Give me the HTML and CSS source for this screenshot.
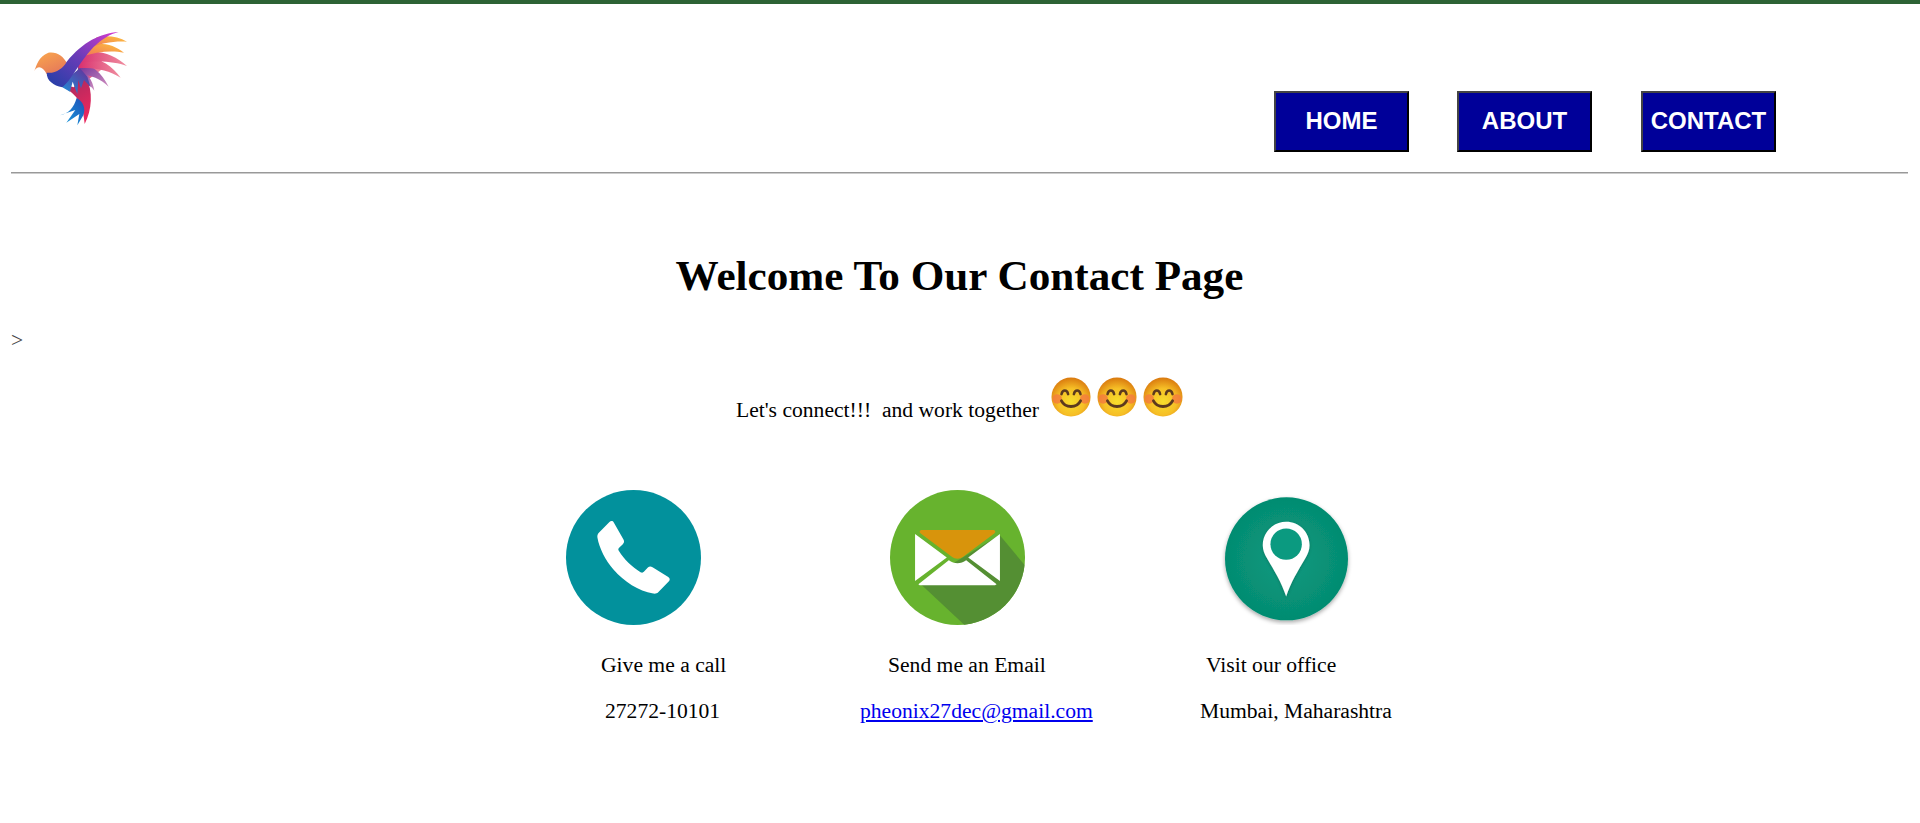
FILE: index.html

```html
<!DOCTYPE html>
<html>

<head>
    <meta charset="utf-8">
    <title>Contact</title>
    <link rel="stylesheet" href="styles.css">
</head>

<body>
<div class="header">
    <svg class="logo" viewBox="90 84 300 300">
        <defs>
            <linearGradient id="wing" x1="1" y1="0" x2="0" y2="1">
                <stop offset="0" stop-color="#d63bd0"/>
                <stop offset="0.5" stop-color="#6a3cb8"/>
                <stop offset="1" stop-color="#1f3fa6"/>
            </linearGradient>
            <linearGradient id="head" x1="0" y1="0" x2="0.6" y2="1">
                <stop offset="0" stop-color="#fba94c"/>
                <stop offset="1" stop-color="#e5785a"/>
            </linearGradient>
            <linearGradient id="feather1" x1="1" y1="0" x2="0" y2="1">
                <stop offset="0" stop-color="#fdc23c"/>
                <stop offset="1" stop-color="#f0705a"/>
            </linearGradient>
            <linearGradient id="feather2" x1="1" y1="0.5" x2="0" y2="0.5">
                <stop offset="0" stop-color="#f08fa0"/>
                <stop offset="1" stop-color="#d92f6e"/>
            </linearGradient>
            <linearGradient id="feather3" x1="1" y1="1" x2="0" y2="0">
                <stop offset="0" stop-color="#d08fc0"/>
                <stop offset="1" stop-color="#6a2a96"/>
            </linearGradient>
            <linearGradient id="tail" x1="0" y1="0" x2="0.5" y2="1">
                <stop offset="0" stop-color="#9c2a5e"/>
                <stop offset="1" stop-color="#e8285e"/>
            </linearGradient>
            <linearGradient id="blue" x1="1" y1="0" x2="0" y2="1">
                <stop offset="0" stop-color="#1f4fb8"/>
                <stop offset="1" stop-color="#18a4e0"/>
            </linearGradient>
            <linearGradient id="mid" x1="1" y1="0" x2="0" y2="1">
                <stop offset="0" stop-color="#6a2a96"/>
                <stop offset="1" stop-color="#1c8fd8"/>
            </linearGradient>
        </defs>
        <path fill="url(#feather2)" d="M240 170L300 160L310 205L270 235L235 230Z"/>
        <path fill="url(#feather3)" d="M235 205C260 215 278 240 283 272C268 252 250 240 225 245Z"/>
        <path fill="url(#feather3)" d="M235 190C275 190 305 220 326 260C300 235 265 222 232 225Z"/>
        <path fill="url(#feather2)" d="M238 175C290 165 335 195 362 233C325 210 280 200 235 205Z"/>
        <path fill="url(#feather2)" d="M245 160C295 145 345 165 381 198C345 185 290 180 235 190Z"/>
        <path fill="url(#feather1)" d="M265 135C305 125 345 135 372 158C335 150 290 155 245 170Z"/>
        <path fill="url(#feather1)" d="M290 112C320 105 355 110 381 125C345 122 300 130 265 145Z"/>
        <path fill="url(#tail)" d="M168 248C205 272 248 280 254 372C276 330 280 275 258 232L235 232L222 262Z"/>
        <path fill="url(#blue)" d="M180 346C205 342 222 322 230 294C250 305 258 325 250 346L232 376L238 342L199 368L226 330Z"/>
        <path fill="url(#head)" d="M103 213C110 195 115 170 145 158C170 154 190 168 201 190L178 224C160 230 145 222 140 222C128 198 112 196 103 213Z"/>
        <path fill="url(#mid)" d="M187 262L205 232L240 205L262 230L272 262L252 240L243 265L235 240L232 282L218 245L210 275Z"/>
        <path fill="url(#wing)" d="M356 96C300 100 250 125 200 185C190 205 165 222 140 218C140 242 160 256 187 262C215 240 235 190 280 142C305 118 330 102 356 96Z"/>
    </svg>
    <div class="nav">
        <button class="nav-btn">HOME</button>
        <button class="nav-btn">ABOUT</button>
        <button class="nav-btn">CONTACT</button>
    </div>
</div>
<hr class="rule">
<h1 class="title">Welcome To Our Contact Page</h1>
<div class="stray">&gt;</div>
<p class="connect">
    <span>Let's connect!!!&nbsp; and work together</span>
    <span class="smileys">
        <svg class="smiley" viewBox="0 0 42 42"><use href="#smile"/></svg>
        <svg class="smiley" viewBox="0 0 42 42"><use href="#smile"/></svg>
        <svg class="smiley" viewBox="0 0 42 42"><use href="#smile"/></svg>
    </span>
</p>
<svg class="defs-only">
    <defs>
        <radialGradient id="face" cx="0.5" cy="0.62" r="0.62">
            <stop offset="0" stop-color="#f8de2c"/>
            <stop offset="0.55" stop-color="#f6bf26"/>
            <stop offset="1" stop-color="#d9780e"/>
        </radialGradient>
        <g id="smile">
            <circle cx="21" cy="21" r="20.5" fill="url(#face)"/>
            <circle cx="6.5" cy="23" r="5" fill="#f47a3e" opacity="0.8"/>
            <circle cx="35.5" cy="23" r="5" fill="#f47a3e" opacity="0.8"/>
            <path d="M11 18C12 13 17 13 18 18M24 18C25 13 30 13 31 18" fill="none" stroke="#5c3a1e" stroke-width="2.6" stroke-linecap="round"/>
            <path d="M11 25C15 33 27 33 31 25" fill="none" stroke="#5c3a1e" stroke-width="3" stroke-linecap="round"/>
        </g>
    </defs>
</svg>
<div class="contacts">
    <div class="contact">
        <svg class="icon" viewBox="48 30 404 404">
            <circle cx="250" cy="232" r="202" fill="#02919c"/>
            <path fill="#fff" d="M178 126C182 122 188 122 191 127L220 178C223 183 222 188 218 192L207 203C204 206 204 209 206 212C222 238 245 260 271 276C275 278 278 278 281 275L293 262C297 258 302 258 307 261L354 290C359 293 360 299 356 303L324 336C320 340 315 341 309 340C265 332 222 305 190 268C165 238 148 205 142 172C141 166 143 161 147 157Z"/>
        </svg>
        <div class="line call-a">Give me a call</div>
        <div class="line call-b">27272-10101</div>
    </div>
    <div class="contact">
        <svg class="icon" viewBox="30 30 404 404">
            <defs><clipPath id="mail-clip"><circle cx="232" cy="232" r="202"/></clipPath></defs>
            <circle cx="232" cy="232" r="202" fill="#67b32e"/>
            <path clip-path="url(#mail-clip)" fill="#548f33" d="M358 165L450 275V450H270L120 310Z"/>
            <path fill="#fff" d="M105 162L200 232L105 302ZM359 162V302L264 232ZM115 312L206 240C222 252 242 252 258 240L349 312C346 315 343 315 340 315H124C120 315 117 315 115 312Z"/>
            <path fill="#d8940c" d="M126 150H338C345 150 348 156 342 160L250 229C238 238 226 238 214 229L122 160C116 156 119 150 126 150Z"/>
        </svg>
        <div class="line mail-a">Send me an Email</div>
        <div class="line mail-b"><a href="#">pheonix27dec@gmail.com</a></div>
    </div>
    <div class="contact">
        <svg class="icon" viewBox="30 23 404 404">
            <defs>
                <radialGradient id="pin-bg" cx="0.5" cy="0.5" r="0.5">
                    <stop offset="0" stop-color="#0b9a80"/>
                    <stop offset="1" stop-color="#058c71"/>
                </radialGradient>
                <filter id="soft" x="-20%" y="-20%" width="140%" height="140%">
                    <feDropShadow dx="0" dy="6" stdDeviation="6" flood-color="#000" flood-opacity="0.35"/>
                </filter>
                <filter id="soft-pin" x="-30%" y="-30%" width="160%" height="160%">
                    <feDropShadow dx="0" dy="3" stdDeviation="4" flood-color="#00503e" flood-opacity="0.45"/>
                </filter>
            </defs>
            <circle cx="232" cy="229" r="184" fill="url(#pin-bg)" filter="url(#soft)"/>
            <path filter="url(#soft-pin)" fill="#fff" d="M231 118C192 118 161 149 161 188C161 202 166 214 174 228C195 264 218 300 231 342C244 300 267 264 288 228C296 214 301 202 301 188C301 149 270 118 231 118Z"/>
            <circle cx="231" cy="185" r="47" fill="#0b9a80"/>
        </svg>
        <div class="line office-a">Visit our office</div>
        <div class="line office-b">Mumbai, Maharashtra</div>
    </div>
</div>
</body>

</html>
```

FILE: styles.css

```css
* {
    box-sizing: border-box;
}
body {
    margin: 0;
    padding: 0 12px 0 11px;
    border-top: 4px solid #2d6335;
    font-family: "Liberation Serif", serif;
    font-size: 21.6px;
    color: #000;
    background: #fff;
}
.header {
    display: flex;
    justify-content: space-between;
    height: 168px;
}
.logo {
    width: 100px;
    height: 100px;
    margin: 24px 0 0 19px;
}
.nav {
    display: flex;
    gap: 48px;
    margin: 87px 132px 0 0;
}
.nav-btn {
    width: 135px;
    height: 61px;
    padding: 0 0 2px;
    background: #000099;
    color: #fff;
    border: 2px outset #444;
    border-color: #444 #000 #000 #444;
    font-family: "Liberation Sans", sans-serif;
    font-size: 24px;
    font-weight: bold;
}
.nav-btn:last-child {
    margin-left: 1px;
}
.rule {
    margin: 0;
    border: 0;
    border-top: 1px solid #999;
    border-bottom: 1px solid #ccc;
}
.title {
    margin: 77px 0 0;
    text-align: center;
    font-size: 43.2px;
    line-height: 50px;
}
.stray {
    margin-top: 27px;
    color: #444;
    line-height: 24px;
}
.connect {
    display: flex;
    justify-content: center;
    align-items: baseline;
    gap: 12px;
    margin: 25px 0 0;
}
.smileys {
    display: flex;
    gap: 6px;
}
.smiley {
    display: block;
    width: 40px;
    height: 40px;
}
.defs-only {
    display: block;
    width: 0;
    height: 0;
}
.contacts {
    display: grid;
    grid-template-columns: 324px 329px 300px;
    margin: 67px 0 0 555px;
}
.icon {
    display: block;
    width: 135px;
    height: 135px;
}
.line {
    line-height: 24px;
}
.call-a, .mail-a, .office-a {
    margin-top: 28px;
}
.call-b, .mail-b, .office-b {
    margin-top: 22px;
}
.call-a {
    padding-left: 35px;
}
.call-b {
    padding-left: 39px;
}
.mail-a {
    margin-left: -2px;
}
.mail-b {
    margin-left: -30px;
}
.office-a {
    margin-left: -13px;
}
.office-b {
    margin-left: -19px;
}
```
